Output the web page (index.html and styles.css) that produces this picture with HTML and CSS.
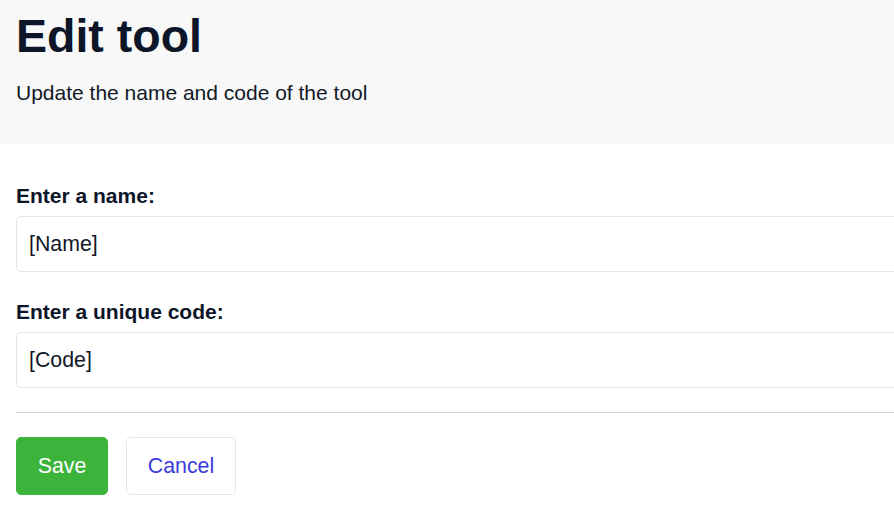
FILE: index.html
```html
<!DOCTYPE html>
<html>
<head>
<meta charset="utf-8">
<link rel="stylesheet" href="styles.css">
</head>
<body>
<header class="hero">
  <h1 class="title">Edit tool</h1>
  <p class="subtitle">Update the name and code of the tool</p>
</header>
<main class="content">
  <form class="form">
    <div class="field">
      <label class="label">Enter a name:</label>
      <div class="input">[Name]</div>
    </div>
    <div class="field">
      <label class="label">Enter a unique code:</label>
      <div class="input">[Code]</div>
    </div>
    <hr class="divider">
    <div class="actions">
      <button type="button" class="btn btn-save">Save</button>
      <button type="button" class="btn btn-cancel">Cancel</button>
    </div>
  </form>
</main>
</body>
</html>
```
FILE: styles.css
```css
html, body {
  margin: 0;
  padding: 0;
  overflow: hidden;
  background: #ffffff;
  font-family: "Liberation Sans", Arial, sans-serif;
  color: #0f172a;
}
.hero {
  background: #f8f8f8;
  height: 144px;
  padding: 8px 16px 0;
  box-sizing: border-box;
}
.title {
  margin: 0;
  font-size: 46.5px;
  font-weight: 700;
  line-height: 56px;
  color: #0d1528;
}
.subtitle {
  margin: 16px 0 0;
  font-size: 21px;
  line-height: 26px;
  color: #111827;
}
.content {
  padding: 40px 16px 0;
  width: 1000px;
}
.form {
  display: flex;
  flex-direction: column;
}
.field {
  display: flex;
  flex-direction: column;
  margin-bottom: 28px;
}
.label {
  font-size: 21px;
  font-weight: 700;
  line-height: 24px;
  margin-bottom: 8px;
  color: #0d1528;
}
.input {
  height: 56px;
  box-sizing: border-box;
  border: 1px solid #e5e5e5;
  border-radius: 5px;
  padding: 0 12px;
  display: flex;
  align-items: center;
  font-size: 21.33px;
  color: #111827;
}
.divider {
  border: 0;
  border-top: 1px solid #d4d4d4;
  margin: -4px 0 24px;
}
.actions {
  display: flex;
  gap: 18px;
}
.btn {
  height: 58px;
  border-radius: 5px;
  font-family: "Liberation Sans", Arial, sans-serif;
  font-size: 21.33px;
  padding: 0;
  cursor: pointer;
}
.btn-save {
  background: #3cb43c;
  border: 1px solid #3cb43c;
  color: #ffffff;
  width: 92px;
}
.btn-cancel {
  background: #ffffff;
  border: 1px solid #e5e5e5;
  color: #3b3bdc;
  width: 110px;
}
```
